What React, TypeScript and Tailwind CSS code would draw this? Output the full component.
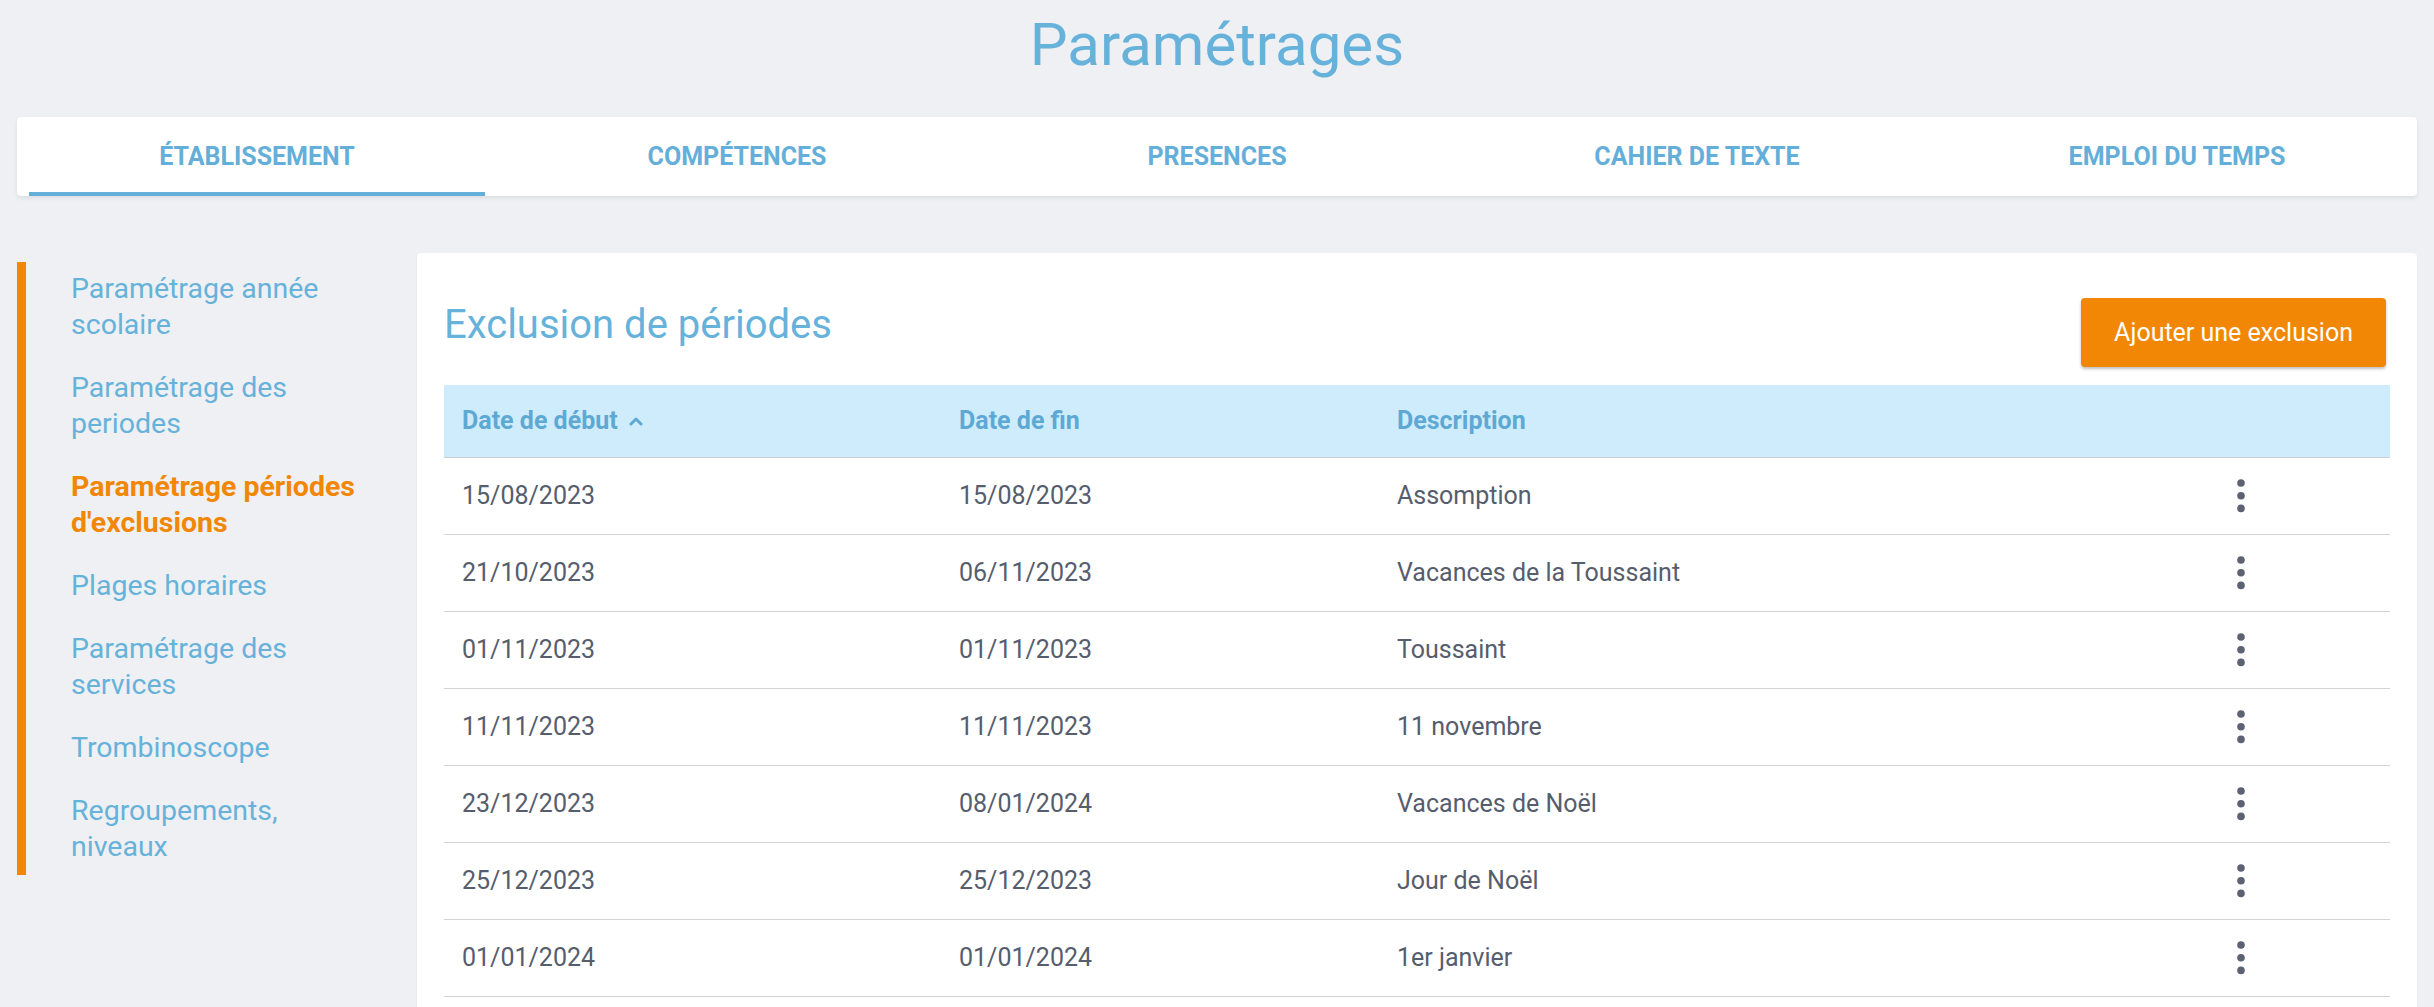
import { useState } from 'react';

// Onglets du haut
const tabs = ['ÉTABLISSEMENT', 'COMPÉTENCES', 'PRESENCES', 'CAHIER DE TEXTE', 'EMPLOI DU TEMPS'];

// Menu de gauche
const menuItems = [
  'Paramétrage année scolaire',
  'Paramétrage des periodes',
  "Paramétrage périodes d'exclusions",
  'Plages horaires',
  'Paramétrage des services',
  'Trombinoscope',
  'Regroupements, niveaux',
];

interface Exclusion {
  id: number;
  start: string;
  end: string;
  description: string;
}

const exclusions: Exclusion[] = [
  { id: 1, start: '15/08/2023', end: '15/08/2023', description: 'Assomption' },
  { id: 2, start: '21/10/2023', end: '06/11/2023', description: 'Vacances de la Toussaint' },
  { id: 3, start: '01/11/2023', end: '01/11/2023', description: 'Toussaint' },
  { id: 4, start: '11/11/2023', end: '11/11/2023', description: '11 novembre' },
  { id: 5, start: '23/12/2023', end: '08/01/2024', description: 'Vacances de Noël' },
  { id: 6, start: '25/12/2023', end: '25/12/2023', description: 'Jour de Noël' },
  { id: 7, start: '01/01/2024', end: '01/01/2024', description: '1er janvier' },
];

const KebabIcon = () => (
  <svg width="8" height="34" viewBox="0 0 8 34" fill="#5d6272">
    <circle cx="4" cy="4" r="3.8" />
    <circle cx="4" cy="16.7" r="3.8" />
    <circle cx="4" cy="29.4" r="3.8" />
  </svg>
);

const SortUpIcon = () => (
  <svg width="14" height="10" viewBox="0 0 14 10" fill="none" stroke="#5ea9d4" strokeWidth="3" strokeLinecap="round" strokeLinejoin="round">
    <polyline points="2,8 7,3 12,8" />
  </svg>
);

export default function App() {
  const [activeTab, setActiveTab] = useState(0);
  const [activeMenu, setActiveMenu] = useState(2);

  return (
    <div className="min-h-screen bg-[#eef0f3] font-[Roboto,sans-serif]">
      {/* Titre */}
      <div className="h-[117px] pt-[10px] text-center">
        <h1 className="text-[60px] leading-[70px] font-normal text-[#67b2da]">Paramétrages</h1>
      </div>

      {/* Onglets */}
      <div className="mx-[17px] h-[79px] bg-white rounded-[4px] shadow-[0_2px_4px_rgba(0,0,0,0.08)] grid grid-cols-5">
        {tabs.map((tab, i) => (
          <button
            key={tab}
            onClick={() => setActiveTab(i)}
            className="flex flex-col h-full"
          >
            <span className="flex-1 flex items-center justify-center pt-[4px] text-[25px] font-bold text-[#64afd9]">
              {tab}
            </span>
            <span className={`h-[4px] mx-[12px] ${activeTab === i ? 'bg-[#64afd9]' : 'bg-transparent'}`}></span>
          </button>
        ))}
      </div>

      <div className="flex px-[17px] pt-[57px]">
        {/* Menu latéral */}
        <div className="w-[400px] shrink-0 pt-[9px]">
          <div className="border-l-[9px] border-[#f28705] pl-[45px] pr-[46px] pt-[9px] pb-[10px] flex flex-col gap-[27px]">
            {menuItems.map((item, i) => (
              <button
                key={item}
                onClick={() => setActiveMenu(i)}
                className={`text-left text-[28.5px] leading-[36px] ${
                  activeMenu === i ? 'font-bold text-[#f28705]' : 'text-[#67b2da]'
                }`}
              >
                {item}
              </button>
            ))}
          </div>
        </div>

        {/* Carte principale */}
        <div className="flex-1 bg-white rounded-[4px] px-[27px] pt-[45px] pb-[40px] shadow-[0_1px_3px_rgba(0,0,0,0.05)]">
          <div className="flex items-start justify-between">
            <h2 className="mt-[3px] text-[40px] leading-[48px] font-normal text-[#67b2da]">Exclusion de périodes</h2>
            <button className="mr-[4px] h-[69px] px-[33px] bg-[#f28705] text-white text-[25px] rounded-[4px] shadow-[0_2px_3px_rgba(0,0,0,0.25)]">
              Ajouter une exclusion
            </button>
          </div>

          <div className="mt-[18px]">
            {/* En-tête */}
            <div className="grid grid-cols-[497px_438px_713px_1fr] h-[73px] items-center bg-[#cfecfc] border-b border-[#c8cdd1] text-[25px] font-bold text-[#5ea9d4]">
              <div className="pl-[18px] flex items-center gap-[11px]">
                <span>Date de début</span>
                <SortUpIcon />
              </div>
              <div className="pl-[18px]">Date de fin</div>
              <div className="pl-[18px]">Description</div>
              <div></div>
            </div>

            {/* Lignes */}
            {exclusions.map((row) => (
              <div
                key={row.id}
                className="grid grid-cols-[497px_438px_713px_1fr] h-[77px] items-center border-b border-[#d3d3d3] text-[25px] text-[#565d6d]"
              >
                <div className="pl-[18px]">{row.start}</div>
                <div className="pl-[18px]">{row.end}</div>
                <div className="pl-[18px]">{row.description}</div>
                <div className="flex justify-center">
                  <KebabIcon />
                </div>
              </div>
            ))}
          </div>
        </div>
      </div>
    </div>
  );
}
